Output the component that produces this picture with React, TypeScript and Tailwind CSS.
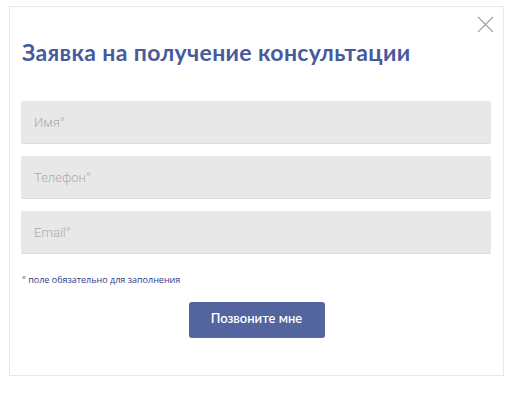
export default function App() {
  const fields = ["Имя°", "Телефон°", "Email°"];
  return (
    <div className="min-h-screen bg-white pl-[9px] pt-[6px]">
      <div className="relative flex h-[370px] w-[495px] flex-col border border-[#e8e8e8] bg-white px-[11px] pt-[30px] font-['Open_Sans',sans-serif]">
        <button className="absolute right-[9px] top-[9px] h-[17px] w-[17px] text-[#8c9a9c]">
          <svg viewBox="0 0 18 18" className="h-full w-full" fill="none" stroke="currentColor" strokeWidth="1.2">
            <path d="M1 1L17 17M17 1L1 17" />
          </svg>
        </button>
        <h1 className="pl-[1px] font-['Lato',sans-serif] text-[23px] font-bold leading-[30px] tracking-[0.35px] text-[#475a9c]">
          Заявка на получение консультации
        </h1>
        <div className="mt-[34px] flex flex-col gap-[12px]">
          {fields.map((f) => (
            <input
              key={f}
              placeholder={f}
              className="h-[43px] w-[470px] rounded-[2px] border-b border-[#dcdcdc] bg-[#e8e8e8] px-[13px] font-['Roboto',sans-serif] text-[13px] font-light text-[#555] placeholder:text-[#ababab] outline-none"
            />
          ))}
        </div>
        <p className="mt-[19px] pl-[1px] font-['Open_Sans',sans-serif] text-[9px] text-[#2f3a82]">
          ° поле обязательно для заполнения
        </p>
        <div className="mt-[15px] flex justify-center">
          <button className="h-[36px] w-[136px] rounded-[3px] border-b border-[#8a5d62] bg-[#53649f] font-['Lato',sans-serif] text-[13px] font-semibold text-white">
            Позвоните мне
          </button>
        </div>
      </div>
    </div>
  );
}
